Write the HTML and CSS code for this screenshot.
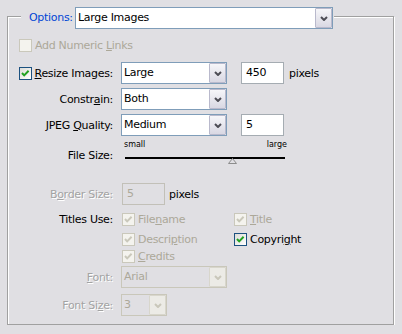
FILE: index.html
```html
<!DOCTYPE html>
<html lang="en">
<head>
  <meta charset="UTF-8">
  <title>Options</title>
  <link rel="stylesheet" href="styles.css">
</head>
<body>
  <fieldset class="panel">
    <legend class="panel-head">
      <span class="head-label">Options:</span>
      <span class="combo combo-options">
        <span class="combo-value">Large Images</span>
        <span class="combo-btn"><svg width="8" height="5" viewBox="0 0 8 5"><polyline points="1,1 4,4 7,1" /></svg></span>
      </span>
    </legend>

    <div class="row row-links">
      <span class="check check-off"></span>
      <span class="check-text is-muted">Add Numeric <u>L</u>inks</span>
    </div>

    <div class="row row-resize">
      <span class="field-label field-label-check">
        <span class="check check-on"><svg width="11" height="11" viewBox="0 0 11 11"><polyline points="2,5 4.2,7.4 8.6,2.8" /></svg></span>
        <span><u>R</u>esize Images:</span>
      </span>
      <span class="combo combo-mid">
        <span class="combo-value">Large</span>
        <span class="combo-btn"><svg width="8" height="5" viewBox="0 0 8 5"><polyline points="1,1 4,4 7,1" /></svg></span>
      </span>
      <span class="edit edit-num">450</span>
      <span class="unit">pixels</span>
    </div>

    <div class="row row-gap">
      <span class="field-label">Constr<u>a</u>in:</span>
      <span class="combo combo-mid">
        <span class="combo-value">Both</span>
        <span class="combo-btn"><svg width="8" height="5" viewBox="0 0 8 5"><polyline points="1,1 4,4 7,1" /></svg></span>
      </span>
    </div>

    <div class="row row-gap">
      <span class="field-label">JPEG <u>Q</u>uality:</span>
      <span class="combo combo-mid">
        <span class="combo-value">Medium</span>
        <span class="combo-btn"><svg width="8" height="5" viewBox="0 0 8 5"><polyline points="1,1 4,4 7,1" /></svg></span>
      </span>
      <span class="edit edit-num">5</span>
    </div>

    <div class="row row-filesize">
      <span class="field-label field-label-low">File Size:</span>
      <div class="slider">
        <div class="slider-scale"><span>small</span><span>large</span></div>
        <div class="slider-track">
          <span class="slider-thumb"><svg width="9" height="6" viewBox="0 0 9 6"><polygon points="4.5,0.5 8.5,5.5 0.5,5.5" /></svg></span>
        </div>
      </div>
    </div>

    <div class="row row-border">
      <span class="field-label is-embossed">B<u>o</u>rder Size:</span>
      <span class="edit edit-num edit-off">5</span>
      <span class="unit unit-near">pixels</span>
    </div>

    <div class="row row-titles">
      <span class="field-label">Titles Use:</span>
      <div class="check-grid">
        <span class="check-item"><span class="check check-dim"><svg width="11" height="11" viewBox="0 0 11 11"><polyline points="2,5 4.2,7.4 8.6,2.8" /></svg></span><span class="check-text is-muted">File<u>n</u>ame</span></span>
        <span class="check-item"><span class="check check-dim"><svg width="11" height="11" viewBox="0 0 11 11"><polyline points="2,5 4.2,7.4 8.6,2.8" /></svg></span><span class="check-text is-muted"><u>T</u>itle</span></span>
        <span class="check-item"><span class="check check-dim"><svg width="11" height="11" viewBox="0 0 11 11"><polyline points="2,5 4.2,7.4 8.6,2.8" /></svg></span><span class="check-text is-muted">Descri<u>p</u>tion</span></span>
        <span class="check-item"><span class="check check-on"><svg width="11" height="11" viewBox="0 0 11 11"><polyline points="2,5 4.2,7.4 8.6,2.8" /></svg></span><span class="check-text">Copyri<u>g</u>ht</span></span>
        <span class="check-item"><span class="check check-dim"><svg width="11" height="11" viewBox="0 0 11 11"><polyline points="2,5 4.2,7.4 8.6,2.8" /></svg></span><span class="check-text is-muted"><u>C</u>redits</span></span>
      </div>
    </div>

    <div class="row row-font">
      <span class="field-label is-embossed"><u>F</u>ont:</span>
      <span class="combo combo-mid combo-off">
        <span class="combo-value">Arial</span>
        <span class="combo-btn"><svg width="8" height="5" viewBox="0 0 8 5"><polyline points="1,1 4,4 7,1" /></svg></span>
      </span>
    </div>

    <div class="row row-fontsize">
      <span class="field-label is-embossed">Font Si<u>z</u>e:</span>
      <span class="combo combo-small combo-off">
        <span class="combo-value">3</span>
        <span class="combo-btn"><svg width="8" height="5" viewBox="0 0 8 5"><polyline points="1,1 4,4 7,1" /></svg></span>
      </span>
    </div>
  </fieldset>
</body>
</html>
```

FILE: styles.css
```css
body {
  margin: 0;
  background: #e0dfe3;
  font-family: "DejaVu Sans", sans-serif;
  font-size: 11px;
  letter-spacing: -0.3px;
  color: #000;
}

u {
  text-underline-offset: 1px;
}

/* group box */
.panel {
  margin: 7px 8px 0 7px;
  padding: 0 0 8px 0;
  min-width: 0;
  border: 1px solid #a0a0a0;
  box-shadow: 1px 1px 0 #fff, inset 1px 1px 0 #fff;
}

.panel-head {
  display: flex;
  align-items: flex-start;
  height: 19px;
  margin-left: 13px;
  padding: 0 1px 0 8px;
  background: #e0dfe3;
}

.head-label {
  width: 46px;
  line-height: 22px;
  color: #0046d5;
}

/* rows */
.row {
  display: flex;
  align-items: center;
  height: 22px;
}

.row-links {
  height: 15px;
  margin-top: 12px;
  padding-left: 11px;
}

.row-resize {
  margin-top: 9px;
}

.row-gap {
  margin-top: 4px;
}

.row-filesize {
  align-items: flex-start;
  height: 26px;
  margin-top: 3px;
}

.row-border {
  margin-top: 18px;
}

.row-titles {
  align-items: flex-start;
  height: auto;
  margin-top: 7px;
}

.row-font {
  margin-top: 2px;
}

.row-fontsize {
  margin-top: 6px;
}

.field-label {
  display: block;
  width: 105px;
  margin-right: 8px;
  text-align: right;
  line-height: 13px;
  white-space: nowrap;
  flex-shrink: 0;
}

.field-label-check {
  display: flex;
  align-items: center;
  justify-content: flex-end;
  gap: 3px;
}

.row-titles .field-label {
  line-height: 15px;
}

.field-label-low {
  margin-top: 10px;
}

.is-muted {
  color: #aca899;
}

.is-embossed {
  color: #a3a3a3;
  text-shadow: 1px 1px 0 #fff;
}

/* combo boxes */
.combo {
  display: flex;
  box-sizing: border-box;
  height: 22px;
  border: 1px solid #7f9db9;
  background: #fff;
}

.combo-options {
  width: 258px;
}

.combo-mid {
  width: 106px;
}

.combo-small {
  width: 46px;
}

.combo-value {
  flex: 1;
  padding-left: 2px;
  line-height: 20px;
}

.combo-btn {
  display: flex;
  align-items: center;
  justify-content: center;
  box-sizing: border-box;
  width: 17px;
  border: 1px solid #b9b9cc;
  border-radius: 1px;
  background: linear-gradient(#f6f6f9, #d9d8e3);
}

.combo-btn polyline {
  fill: none;
  stroke: #4d4d55;
  stroke-width: 2;
}

.combo-off {
  border-color: #c9c7ba;
  background: #e0dfe3;
}

.combo-off .combo-value {
  color: #aca899;
}

.combo-off .combo-btn {
  border-color: #d8d6cc;
  background: #ecebe6;
}

.combo-off .combo-btn polyline {
  stroke: #c9c7ba;
}

/* edit boxes */
.edit {
  box-sizing: border-box;
  height: 22px;
  border: 1px solid #a5acb2;
  background: #fff;
  padding-left: 4px;
  line-height: 20px;
}

.edit-num {
  width: 43px;
  margin-left: 14px;
}

.edit-off {
  margin-left: 1px;
  border-color: #c2c0b8;
  background: #e0dfe3;
  color: #aca899;
}

.unit {
  margin-left: 5px;
}

.unit-near {
  margin-left: 4px;
}

/* check boxes */
.check {
  display: flex;
  box-sizing: border-box;
  width: 13px;
  height: 13px;
  border: 1px solid #1c5180;
  background: linear-gradient(135deg, #dcdcd7, #fff);
  flex-shrink: 0;
}

.check polyline {
  fill: none;
  stroke: #21a121;
  stroke-width: 2;
}

.check-off {
  border-color: #cac8bb;
  background: #f4f3ee;
}

.check-dim {
  border-color: #cac8bb;
  background: #f4f3ee;
}

.check-dim polyline {
  stroke: #cac8bb;
}

.check-text {
  margin-left: 3px;
  line-height: 13px;
}

.check-grid {
  display: grid;
  grid-template-columns: 112px auto;
  grid-template-rows: 20px 17px 15px;
  margin-left: 1px;
}

.check-item {
  display: flex;
  align-items: center;
  height: 15px;
}

/* slider */
.slider {
  width: 163px;
  margin-left: 3px;
}

.slider-scale {
  display: flex;
  justify-content: space-between;
  height: 11px;
  font-size: 8px;
  line-height: 11px;
  letter-spacing: 0;
}

.slider-track {
  position: relative;
  width: 160px;
  height: 2px;
  margin: 7px 0 0 1px;
  background: #000;
}

.slider-thumb {
  position: absolute;
  left: 103px;
  top: 1px;
  display: flex;
}

.slider-thumb polygon {
  fill: #e0dfe3;
  stroke: #8c8c8c;
}
```
